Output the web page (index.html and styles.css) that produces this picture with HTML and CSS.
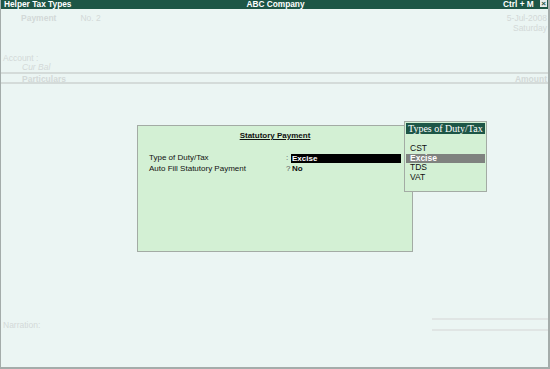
FILE: index.html
```html
<!DOCTYPE html>
<html lang="en">
<head>
    <meta charset="UTF-8">
    <title>Helper Tax Types</title>
    <link rel="stylesheet" href="styles.css">
</head>
<body>
    <div class="screen">
        <div class="titlebar">
            <span class="title-left">Helper Tax Types</span>
            <span class="title-center">ABC Company</span>
            <span class="title-right">Ctrl + M <span class="close-box">&#215;</span></span>
        </div>

        <div class="voucher-head">
            <div class="voucher-type">
                <span class="vname">Payment</span>
                <span class="vno">No. 2</span>
            </div>
            <div class="voucher-date">
                <div>5-Jul-2008</div>
                <div>Saturday</div>
            </div>
        </div>

        <div class="account">
            <div>Account :</div>
            <div class="cur-bal">Cur Bal</div>
        </div>

        <div class="col-head">
            <span>Particulars</span>
            <span>Amount</span>
        </div>

        <div class="body-space"></div>

        <div class="narration">
            <span>Narration:</span>
            <div class="totals"></div>
        </div>

        <!-- Statutory payment sub-screen -->
        <div class="stat-panel">
            <div class="stat-title">Statutory Payment</div>
            <div class="stat-row">
                <span class="stat-label">Type of Duty/Tax</span>
                <span class="stat-sep">:</span>
                <span class="stat-value active">Excise</span>
            </div>
            <div class="stat-row">
                <span class="stat-label">Auto Fill Statutory Payment</span>
                <span class="stat-sep">?</span>
                <span class="stat-value">No</span>
            </div>
        </div>

        <!-- Duty list popup -->
        <div class="duty-list">
            <div class="duty-head">Types of Duty/Tax</div>
            <ul>
                <li>CST</li>
                <li class="selected">Excise</li>
                <li>TDS</li>
                <li>VAT</li>
            </ul>
        </div>
    </div>
</body>
</html>
```

FILE: styles.css
```css
* {
    box-sizing: border-box;
    margin: 0;
    padding: 0;
}
body {
    font-family: 'Liberation Sans', Arial, sans-serif;
    font-size: 8px;
    background: #ebf5f3;
}
.screen {
    position: relative;
    width: 550px;
    height: 369px;
    background: #ebf5f3;
    border-left: 1px solid #a4acaa;
    border-right: 2px solid #a4acaa;
    border-bottom: 2px solid #a4acaa;
    display: flex;
    flex-direction: column;
    color: #d3d9d8;
}
.titlebar {
    height: 9px;
    background: #1d5646;
    color: #fff;
    font-weight: bold;
    font-size: 8.3px;
    line-height: 9px;
    display: flex;
    justify-content: space-between;
    padding-left: 3px;
    padding-right: 1px;
}
.title-left,
.title-right {
    width: 160px;
}
.title-right {
    text-align: right;
}
.close-box {
    display: inline-block;
    width: 7px;
    height: 7px;
    margin-left: 4px;
    background: #e6ebea;
    color: #1d5646;
    border: 1px solid #e6ebea;
    font-size: 8px;
    line-height: 5px;
    text-align: center;
    vertical-align: 1px;
}
.voucher-head {
    display: flex;
    justify-content: space-between;
    padding: 4px 1px 0 20px;
    line-height: 10px;
    font-size: 8.5px;
}
.vname {
    font-weight: bold;
    display: inline-block;
    width: 57px;
}
.voucher-date {
    text-align: right;
}
.account {
    margin-top: 21px;
    padding-left: 2px;
    line-height: 9px;
    font-size: 8.5px;
}
.cur-bal {
    font-style: italic;
    padding-left: 19px;
}
.col-head {
    border-top: 2px solid #d4dbd9;
    border-bottom: 2px solid #d4dbd9;
    height: 12px;
    display: flex;
    justify-content: space-between;
    padding: 1px 1px 0 21px;
    font-weight: bold;
    font-size: 8.5px;
    line-height: 8px;
}
.body-space {
    flex: 1;
}
.narration {
    height: 49px;
    display: flex;
    justify-content: space-between;
    align-items: flex-start;
    padding-left: 2px;
    font-size: 8.5px;
}
.narration span {
    margin-top: 2px;
}
.totals {
    width: 116px;
    height: 13px;
    border-top: 2px solid #e0e5e4;
    border-bottom: 2px solid #e0e5e4;
}
.stat-panel {
    position: absolute;
    left: 136px;
    top: 125px;
    width: 276px;
    height: 127px;
    background: #d3f0d4;
    border: 1px solid #a3aba4;
    color: #111;
    padding: 5px 0 0 11px;
}
.stat-title {
    text-align: center;
    font-weight: bold;
    text-decoration: underline;
    padding-right: 11px;
    line-height: 10px;
    margin-bottom: 12px;
}
.stat-row {
    display: flex;
    line-height: 10px;
    height: 10.5px;
    align-items: center;
}
.stat-label {
    width: 137px;
}
.stat-sep {
    width: 5px;
    color: #555;
}
.stat-value {
    font-weight: bold;
    padding-left: 1px;
}
.stat-value.active {
    width: 110px;
    height: 9px;
    line-height: 9px;
    background: #000;
    color: #fff;
}
.duty-list {
    position: absolute;
    left: 403px;
    top: 121px;
    width: 83px;
    height: 71px;
    background: #d3f0d4;
    border: 1px solid #a3aba4;
    color: #111;
}
.duty-head {
    background: #1d5646;
    color: #fff;
    font-family: 'Liberation Serif', 'Times New Roman', serif;
    font-size: 10px;
    line-height: 11px;
    height: 12px;
    padding-left: 2px;
    border: 1px solid #d3f0d4;
    border-bottom: none;
}
.duty-list ul {
    list-style: none;
    margin-top: 10px;
    padding: 0 1px;
    font-size: 8.5px;
}
.duty-list li {
    line-height: 9.5px;
    height: 9.5px;
    padding-left: 4px;
}
.duty-list li.selected {
    background: #7f827f;
    color: #fff;
    font-weight: bold;
}
```
